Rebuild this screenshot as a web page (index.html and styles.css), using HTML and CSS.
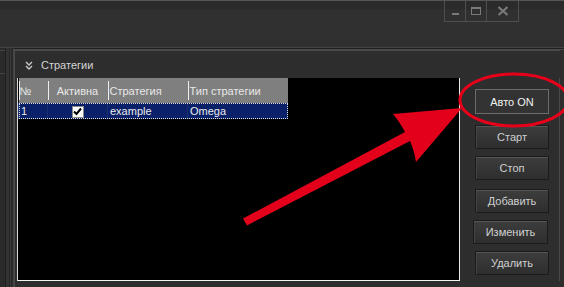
FILE: index.html
```html
<!DOCTYPE html>
<html>
  <head>
  <meta charset="utf-8">
  <title>Стратегии</title>
  <link rel="stylesheet" href="styles.css">
  </head>
  <body>
    <div class="app">
      <div class="titlebar">
        <div class="wincontrols">
          <span class="wbtn wmin"><i></i></span>
          <span class="wbtn wmax"><i></i></span>
          <span class="wbtn wclose">
            <svg width="12" height="10" viewBox="0 0 12 10"><path d="M1.5 1 L10.5 9 M10.5 1 L1.5 9" stroke="#7a7a7a" stroke-width="2.2"/></svg>
          </span>
        </div>
      </div>

      <div class="main">
        <div class="side"></div>
        <div class="panel">
          <div class="panel-head">
            <svg class="chev" width="8" height="9" viewBox="0 0 8 9"><path d="M1 1 L4 4 L7 1 M1 5 L4 8 L7 5" stroke="#c8c8c8" stroke-width="1.4" fill="none"/></svg>
            <span>Стратегии</span>
          </div>
          <div class="panel-body">
            <div class="grid">
              <table class="tbl">
                <tr class="thead">
                  <th class="c1">№</th>
                  <th class="c2 center">Активна</th>
                  <th class="c3">Стратегия</th>
                  <th class="c4">Тип стратегии</th>
                </tr>
                <tr class="sel">
                  <td>1</td>
                  <td class="center"><span class="chk">
                    <svg width="9" height="9" viewBox="0 0 9 9"><path d="M1 4.5 L3.5 7 L8 1.5" stroke="#000" stroke-width="2" fill="none"/></svg>
                  </span></td>
                  <td>example</td>
                  <td>Omega</td>
                </tr>
              </table>
            </div>
            <div class="actions">
              <button class="btn focus">Авто ON</button>
              <button class="btn">Старт</button>
              <button class="btn">Стоп</button>
              <button class="btn add">Добавить</button>
              <button class="btn wide">Изменить</button>
              <button class="btn">Удалить</button>
            </div>
          </div>
        </div>
      </div>
    </div>

    <!-- пометка поверх скриншота -->
    <svg class="markup" width="564" height="287" viewBox="0 0 564 287">
      <ellipse cx="514" cy="100" rx="54" ry="26" fill="none" stroke="#e8001a" stroke-width="3"/>
      <path d="M243 218.5 L405 132 Q399 121 393 114 L462 108 L416 162 Q414 150 410 141 L247 225.5 Z" fill="#e3001b"/>
    </svg>
  </body>
</html>
```
FILE: styles.css
```css
body{
  margin: 0;
  background-color: #2f2f2f;
  font-family: "Liberation Sans", Arial, sans-serif;
  font-size: 11px;
  color: #d6d6d6;
}

.app{
  width: 564px;
  height: 287px;
  display: flex;
  flex-direction: column;
  overflow: hidden;
}

/* верхняя полоса окна */
.titlebar{
  height: 46px;
  border-top: 1px solid #555;
  background: linear-gradient(#2b2b2b 0, #2b2b2b 8px, #303030 9px);
  display: flex;
  justify-content: flex-end;
  align-items: flex-start;
  padding-right: 45px;
}
.wincontrols{
  display: flex;
  border: 1px solid #4e4e4e;
  border-top: none;
  height: 20px;
}
.wbtn{
  width: 20px;
  display: flex;
  align-items: center;
  justify-content: center;
  border-left: 1px solid #4e4e4e;
}
.wbtn:first-child{ border-left: none; }
.wclose{ width: 31px; }
.wmin i{
  width: 7px;
  height: 2px;
  background: #7a7a7a;
  margin-top: 6px;
}
.wmax i{
  width: 8px;
  height: 5px;
  border: 1px solid #7a7a7a;
  border-top-width: 2px;
}

.main{
  flex: 1;
  display: flex;
  border-top: 1px solid #444;
}
.side{
  width: 13px;
  background:
    linear-gradient(90deg, #2a2a2a 0 5px, #1e1e1e 5px 6px, #333 6px 9px, #252525 9px 10px, #3a3a3a 10px 11px, #2a2a2a 11px);
  position: relative;
}
.side::after{
  content: "";
  position: absolute;
  left: 0;
  width: 5px;
  top: 2px;
  height: 22px;
  border-top: 1px solid #454545;
  border-bottom: 1px solid #454545;
}

.panel{
  flex: 1;
  display: flex;
  flex-direction: column;
  border-top: 1px solid #1f1f1f;
  border-left: 1px solid #454545;
  background-color: #2d2d2d;
  background-image: repeating-conic-gradient(#303030 0 25%, #2b2b2b 0 50%);
  background-size: 2px 2px;
  padding: 0 4px 0 1px;
  box-shadow: inset 1px 1px 0 #4a4a4a;
}

.panel-head{
  height: 27px;
  display: flex;
  align-items: center;
  padding-left: 10px;
  gap: 8px;
  color: #d4d4d4;
  border-top: 1px solid #4a4a4a;
  margin-top: 1px;
}
.chev{ margin-top: 1px; }

.panel-body{
  display: flex;
  height: 203px;
  padding-left: 2px;
  border-right: 1px solid #4a4a4a;
}

.grid{
  width: 441px;
  background: #000;
  border-left: 1px solid #d8d8d8;
  border-right: 1px solid #e8e8e8;
  border-bottom: 1px solid #f4f4f4;
}

.tbl{
  border-collapse: collapse;
  width: 270px;
  table-layout: fixed;
}
.tbl th, .tbl td{
  padding: 0 0 0 2px;
  text-align: left;
  font-weight: normal;
  white-space: nowrap;
}
.tbl .center{ text-align: center; padding-left: 0; }
.c1{ width: 28px; }
.c2{ width: 60px; }
.c3{ width: 78px; }

.thead th{
  height: 25px;
  background: #7f7f7f;
  color: #e8e8e8;
  position: relative;
}
.thead th::before{
  content: "";
  position: absolute;
  left: 0;
  top: 3px;
  bottom: 3px;
  width: 1px;
  background: #eeeeee;
}
.thead th:first-child{ padding-left: 1px; }

.sel td{
  height: 16px;
  background: #0a2068;
  color: #ececec;
  border-left: 1px solid #1a2f70;
}
.sel{ outline: 1px dotted #e0e0e0; outline-offset: -1px; }

.chk{
  display: inline-flex;
  width: 10px;
  height: 10px;
  background: #fff;
  border: 1px solid #8a8a8a;
  align-items: center;
  justify-content: center;
  vertical-align: middle;
}

.actions{
  flex: 1;
  display: flex;
  flex-direction: column;
  align-items: flex-start;
  padding: 11px 0 0 15px;
  gap: 7px;
}
.btn{
  width: 74px;
  height: 24px;
  font-family: "Liberation Sans", Arial, sans-serif;
  font-size: 11px;
  color: #d0d0d0;
  background: linear-gradient(#3d3d3d, #2e2e2e);
  border: 1px solid #1b1b1b;
  box-shadow: inset 0 1px 0 #555, inset 1px 0 0 #444;
  padding: 0;
}
.btn.focus{
  height: 25px;
  background: #333;
  border-color: #6c6c6c;
  box-shadow: none;
  color: #f2f2f2;
  margin-bottom: 4px;
}
.btn.add{ margin-top: 2px; }
.btn.wide{ width: 75px; margin-left: -2px; }

.markup{
  position: absolute;
  left: 0;
  top: 0;
  pointer-events: none;
}
```
